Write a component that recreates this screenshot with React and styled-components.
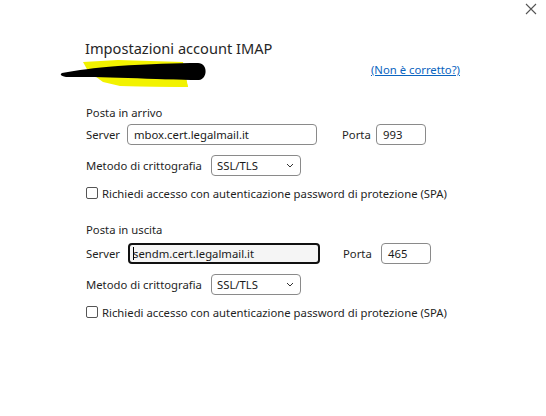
import React from "react";
import styled, { createGlobalStyle } from "styled-components";

const Global = createGlobalStyle`
  html, body { margin: 0; padding: 0; background: #ffffff; }
  body { font-family: "Segoe UI", "Noto Sans", "Open Sans", sans-serif; color: #1f1f1f; }
`;

const Page = styled.div`
  position: relative;
  width: 546px;
  height: 416px;
  background: #fff;
  box-sizing: border-box;
  padding: 38px 0 0 86px;
`;

const Close = styled.button`
  position: absolute;
  top: 2px;
  right: 8px;
  width: 14px;
  height: 14px;
  padding: 0;
  border: 0;
  background: transparent;
  display: flex;
  align-items: center;
  justify-content: center;
`;

const Title = styled.h1`
  margin: 0 0 0 -1px;
  font-size: 14.6px;
  font-weight: 400;
  line-height: 20px;
  height: 20px;
  color: #262626;
`;

const AccountRow = styled.div`
  display: flex;
  align-items: flex-start;
  height: 30px;
  margin-top: 1px;
  width: 374px;
  justify-content: space-between;
`;

const Scribble = styled.svg`
  margin-left: -28px;
  display: block;
  flex: none;
`;

const Link = styled.a`
  font-size: 11.3px;
  color: #0a64c0;
  text-decoration: underline;
  margin-top: 3px;
  cursor: pointer;
`;

const Section = styled.section`
  display: flex;
  flex-direction: column;
  margin-top: ${(p) => p.$top}px;
`;

const SectionLabel = styled.div`
  font-size: 11.3px;
  line-height: 16px;
  height: 16px;
  color: #1f1f1f;
`;

const Row = styled.div`
  display: flex;
  align-items: center;
  height: 21px;
  margin-top: ${(p) => p.$top}px;
  font-size: 11.3px;
`;

const Label = styled.label`
  font-size: 11.3px;
  color: #1f1f1f;
  width: ${(p) => p.$w}px;
  margin-left: ${(p) => p.$ml || 0}px;
  flex: none;
`;

const Field = styled.div`
  box-sizing: border-box;
  width: ${(p) => p.$w}px;
  height: 21px;
  border: ${(p) => (p.$focus ? "2px solid #111" : "1px solid #8a8a8a")};
  border-radius: 4px;
  padding: 0 ${(p) => (p.$focus ? 3 : 6)}px;
  display: flex;
  align-items: center;
  font-size: 11.3px;
  color: #1a1a1a;
  background: ${(p) => (p.$focus ? "#f5f5f5" : "#fff")};
  flex: none;
`;

const Caret = styled.span`
  display: inline-block;
  width: 1px;
  height: 13px;
  background: #000;
  margin-right: -1px;
`;

const Select = styled.div`
  box-sizing: border-box;
  width: 90px;
  height: 21px;
  border: 1px solid #8a8a8a;
  border-radius: 4px;
  padding: 0 6px 0 5px;
  display: flex;
  align-items: center;
  justify-content: space-between;
  font-size: 11.3px;
  color: #1a1a1a;
`;

const CheckRow = styled.div`
  display: flex;
  align-items: center;
  height: 16px;
  margin-top: ${(p) => p.$top}px;
  gap: 4px;
`;

const Box = styled.span`
  box-sizing: border-box;
  width: 12px;
  height: 12px;
  border: 1px solid #555;
  border-radius: 2px;
  flex: none;
`;

const CheckText = styled.span`
  font-size: 11.3px;
  color: #1f1f1f;
`;

function ServerBlock({ title, top, server, port, focus, portLabelW, portLabelMl, serverW, rowTop }) {
  return (
    <Section $top={top}>
      <SectionLabel>{title}</SectionLabel>
      <Row $top={rowTop}>
        <Label $w={focus ? 42 : 41}>Server</Label>
        <Field $w={serverW} $focus={focus}>
          {focus && <Caret />}
          {server}
        </Field>
        <Label $w={portLabelW} $ml={portLabelMl}>Porta</Label>
        <Field $w={50}>{port}</Field>
      </Row>
      <Row $top={10}>
        <Label $w={125}>Metodo di crittografia</Label>
        <Select>
          SSL/TLS
          <svg width="8" height="5" viewBox="0 0 8 5">
            <path d="M1 1 L4 4 L7 1" fill="none" stroke="#333" strokeWidth="1" />
          </svg>
        </Select>
      </Row>
      <CheckRow $top={9}>
        <Box />
        <CheckText>Richiedi accesso con autenticazione password di protezione (SPA)</CheckText>
      </CheckRow>
    </Section>
  );
}

export default function App() {
  return (
    <>
      <Global />
      <Page>
        <Close aria-label="Chiudi">
          <svg width="12" height="12" viewBox="0 0 12 12">
            <path d="M1 1 L11 11 M11 1 L1 11" stroke="#555" strokeWidth="1.1" />
          </svg>
        </Close>
        <Title>Impostazioni account IMAP</Title>
        <AccountRow>
          <Scribble width="150" height="30" viewBox="0 0 150 30">
            <polygon points="25,3 60,1 125,3 130,28 62,27 45,23 30,12" fill="#f2f200" />
            <path
              d="M4 14 C20 11 35 9 60 7 C90 5 120 4 140 4 C150 4 150 20 141 21 C120 21 95 20 70 19 C45 18 25 18 8 18 C2 17 2 15 4 14 Z"
              fill="#000"
            />
            <polygon points="60,20 128,21 130,28 62,27" fill="#f2f200" />
          </Scribble>
          <Link>(Non è corretto?)</Link>
        </AccountRow>
        <ServerBlock
          title="Posta in arrivo"
          top={16}
          rowTop={3}
          server="mbox.cert.legalmail.it"
          port="993"
          serverW={190}
          portLabelW={34}
          portLabelMl={25}
        />
        <ServerBlock
          title="Posta in uscita"
          top={21}
          rowTop={5}
          server="sendm.cert.legalmail.it"
          port="465"
          focus
          serverW={192}
          portLabelW={38}
          portLabelMl={23}
        />
      </Page>
    </>
  );
}
